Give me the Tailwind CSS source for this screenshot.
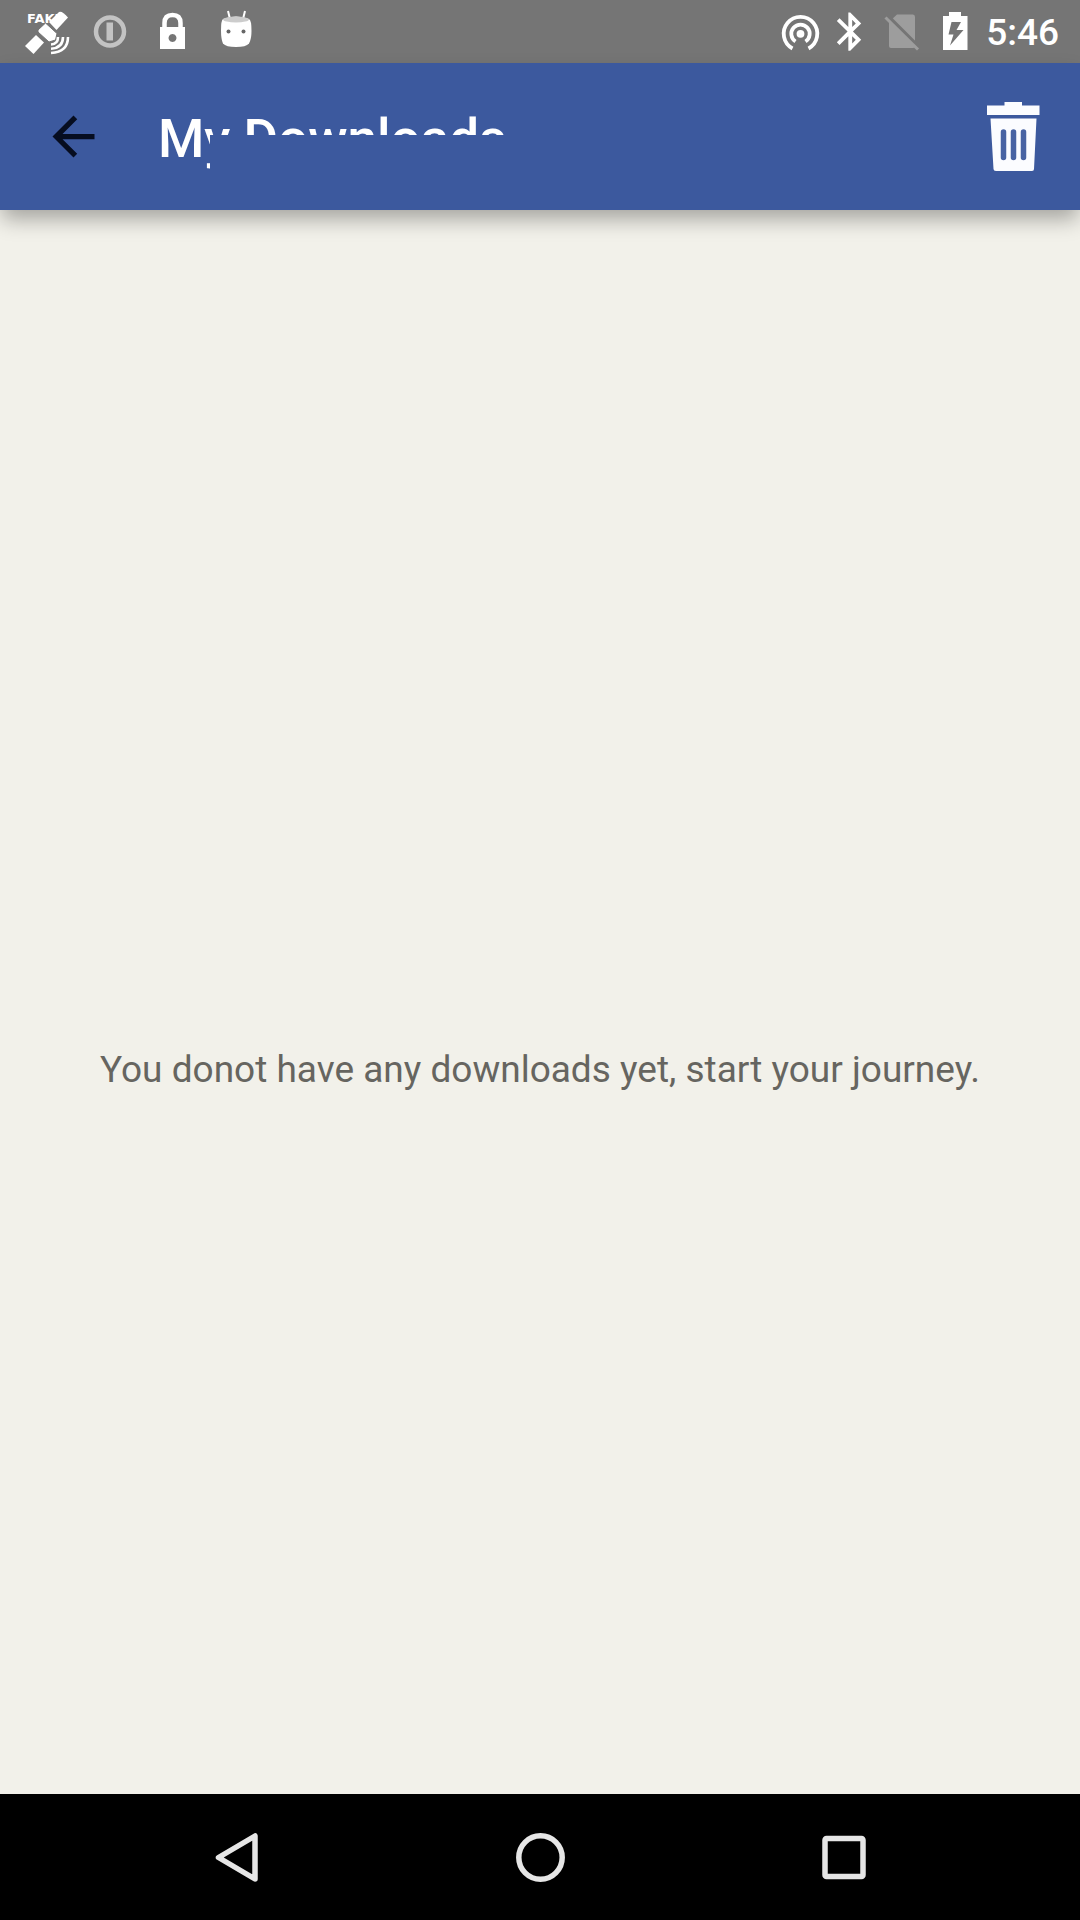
<!DOCTYPE html>
<html lang="en">
<head>
<meta charset="utf-8">
<meta name="viewport" content="width=device-width, initial-scale=1">
<title>My Downloads</title>
<script src="https://cdn.jsdelivr.net/npm/@tailwindcss/browser@4"></script>
</head>
<body class="flex min-h-screen flex-col bg-[#f2f1ea] font-['Roboto',sans-serif]">

<!-- Status bar -->
<div class="flex h-[63px] shrink-0 items-center justify-between bg-[#757575] pr-[21px] pl-4 text-white">
  <div class="flex">
    <svg class="size-[63px]" viewBox="0 0 63 63" aria-label="Fake location">
      <text x="11" y="23" font-family="DejaVu Sans, sans-serif" font-weight="700" font-size="13" fill="#fff">FAKE</text>
      <g fill="#fff">
        <path d="M33 22L43 12Q46 10.500 52 17.500L40.500 30Z"/>
        <path d="M9 46L20 35L28 42.500L17.500 54Z"/>
        <path stroke="#757575" d="M22 30L29.500 23L41 33.500L39.500 40L33 42L22 32Z"/>
      </g>
      <g fill="none" stroke="#fff" stroke-width="2.600">
        <path d="M42 37Q42 44 35 44.500"/><path d="M47 37Q47 48 35 48.700"/><path d="M52 37Q52 52 35 53"/>
      </g>
    </svg>
    <svg class="size-[63px]" viewBox="0 0 63 63" aria-label="Information">
      <circle cx="31" cy="31.500" r="14" fill="none" stroke="#c3c3c3" stroke-width="4.500"/>
      <rect x="27.500" y="22.500" width="6.500" height="18" fill="#c3c3c3"/>
    </svg>
    <svg class="size-[63px]" viewBox="0 0 63 63" aria-label="Locked">
      <path d="M22.500 28V23Q22.500 15 30.500 15T38.500 23V28" fill="none" stroke="#fff" stroke-width="4.500"/>
      <path fill="#fff" fill-rule="evenodd" d="M18 27H43V49H18ZM30.500 34a4 4 0 1 0 .01 0Z"/>
    </svg>
    <svg class="size-[63px]" viewBox="0 0 63 63" aria-label="Android">
      <path d="M23 11L25 19M40 11L38 19" stroke="#fff" stroke-width="2"/>
      <path d="M18 19Q31 14 44 19Q46.500 20 46.500 31Q46.500 39 44 43.500Q41 47 31 47T18 43.500Q16 39 16 31Q16 20 18 19Z" fill="#fff"/>
      <ellipse cx="31" cy="19.500" rx="13" ry="3" fill="#ccc"/>
      <circle cx="23.500" cy="31.500" r="2" fill="#666"/><circle cx="38.500" cy="31.500" r="2" fill="#666"/>
    </svg>
  </div>
  <div class="flex items-center">
    <svg class="h-[63px] w-[51px]" viewBox="0 0 51 63" aria-label="Hotspot">
      <g fill="none" stroke="#fff" stroke-width="3.800">
        <path d="M17.500 48.500A16.800 16.800 0 1 1 33.500 48.500"/>
        <path d="M20.500 41.500A9.200 9.200 0 1 1 30.500 41.500"/>
      </g>
      <circle cx="25.500" cy="33.800" r="3.900" fill="#fff"/>
    </svg>
    <svg class="h-[63px] w-[51px]" viewBox="0 0 51 63" aria-label="Bluetooth">
      <path transform="translate(-4.500 8.600) scale(1.917)" fill="#fff" d="M20.710 7.710L15 2h-1v7.590L9.410 5 8 6.410 13.590 12 8 17.590 9.410 19 14 14.410V22h1l5.710-5.710-4.300-4.290 4.300-4.290zM16 5.830l1.880 1.880L16 9.590V5.830zm1.880 10.460L16 18.170v-3.760l1.880 1.880z"/>
    </svg>
    <svg class="h-[63px] w-[51px]" viewBox="0 0 51 63" aria-label="No SIM card">
      <path d="M20 14.500H36Q38 14.500 38 17V46Q38 48 36 48H14Q12 48 12 46V22Z" fill="#9d9d9d"/>
      <path d="M10 15.500L43 48.500" stroke="#757575" stroke-width="4"/>
      <path d="M8.500 17.500L41 49.500" stroke="#9d9d9d" stroke-width="3"/>
    </svg>
    <svg class="h-[63px] w-[51px]" viewBox="0 0 51 63" aria-label="Battery charging">
      <path fill="#fff" fill-rule="evenodd" d="M21 12H33V16H39.500V50H15V16H21ZM23.500 22L20.500 34.500H25.500L22 45.500L35.500 30H28.500L33 22Z"/>
    </svg>
    <time class="ml-[7px] pt-[2px] text-[37px] leading-[61px] font-medium">5:46</time>
  </div>
</div>

<!-- App bar -->
<header class="relative z-10 flex h-[147px] shrink-0 items-center bg-[#3c599e] pr-10 pl-[42px] shadow-[0_11px_20px_-2px_rgba(0,0,0,0.32)]">
  <button type="button" aria-label="Back" class="size-[63px]">
    <svg class="size-full" viewBox="0 0 24 24"><path fill="#060d20" d="M20 11H7.830l5.590-5.590L12 4l-8 8 8 8 1.410-1.410L7.830 13H20v-2z"/></svg>
  </button>
  <h1 class="relative ml-[53px] pt-[6px] text-[53px] leading-[63px] font-medium text-white">
    My Downloads
    <span class="absolute top-[33px] right-0 bottom-0 left-[52px] bg-[#3c599e]"></span>
  </h1>
  <button type="button" aria-label="Delete downloads" class="ml-auto h-[70px] w-[53px]">
    <svg class="size-full" viewBox="0 0 53 70">
      <path fill="#fbfcff" d="M17.500 0H35V3.500H52.500V13H0V3.500H17.500Z"/>
      <path fill="#fbfcff" d="M3.500 16.500H49.500L47 67Q47 69 45 69H9Q6.500 69 6.500 67Z"/>
      <path stroke="#4863a3" stroke-width="5.500" stroke-linecap="round" d="M16.500 30V55.500M26.500 30V55.500M36.500 30V55.500"/>
    </svg>
  </button>
</header>

<!-- Empty state -->
<main class="flex flex-1 items-center justify-center pt-[135px]">
  <p class="text-center text-[37px] leading-[43px] text-[#666560]">You donot have any downloads yet, start your journey.</p>
</main>

<!-- Navigation bar -->
<nav class="flex h-[126px] shrink-0 items-center justify-center bg-black">
  <button type="button" aria-label="Back" class="flex h-full w-[304px] items-center justify-center">
    <svg class="size-[63px]" viewBox="0 0 63 63"><path d="M50 10V53L13.500 31.500Z" fill="none" stroke="#e6e6e6" stroke-width="5.500" stroke-linejoin="round"/></svg>
  </button>
  <button type="button" aria-label="Home" class="flex h-full w-[304px] items-center justify-center">
    <svg class="size-[63px]" viewBox="0 0 63 63"><circle cx="31.500" cy="31.500" r="21.700" fill="none" stroke="#e6e6e6" stroke-width="5.500"/></svg>
  </button>
  <button type="button" aria-label="Recent apps" class="flex h-full w-[304px] items-center justify-center">
    <svg class="size-[63px]" viewBox="0 0 63 63"><rect x="12" y="12.500" width="38" height="38" rx="1.500" fill="none" stroke="#e6e6e6" stroke-width="5.500"/></svg>
  </button>
</nav>
</body>
</html>
